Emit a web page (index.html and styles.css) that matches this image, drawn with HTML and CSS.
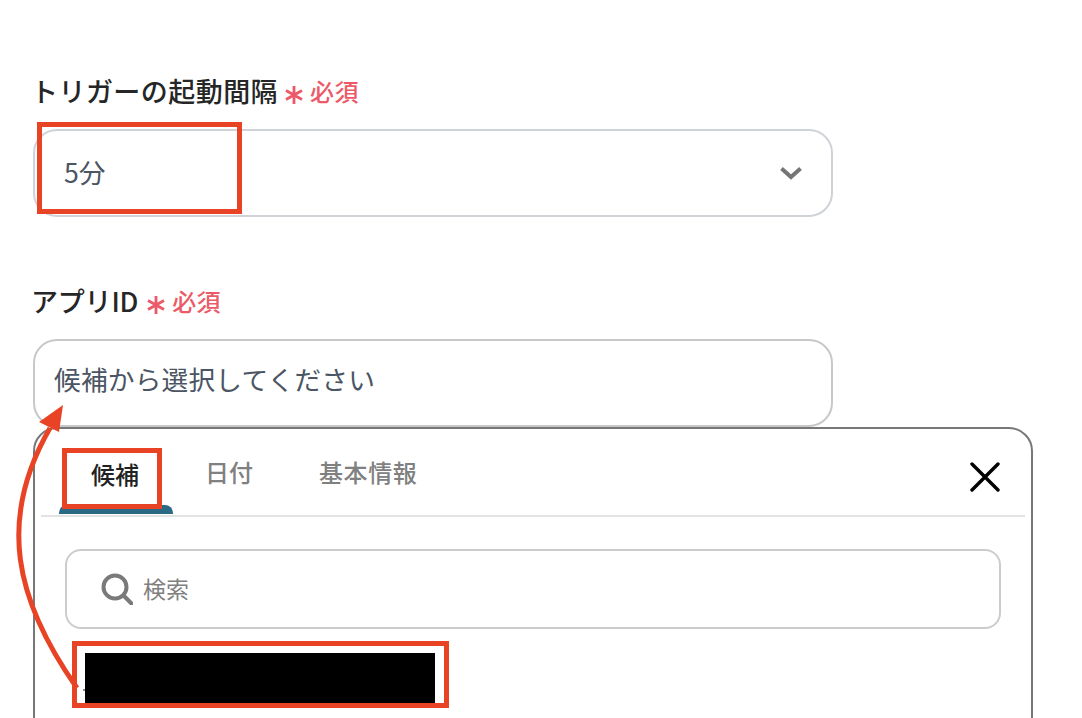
FILE: index.html
```html
<!DOCTYPE html>
<html lang="ja">
<head>
  <meta charset="UTF-8">
  <title>トリガーの起動間隔</title>
  <link rel="stylesheet" href="styles.css">
</head>
<body>
  <div class="page">

    <div class="field field-interval">
      <div class="label">
        <span class="label-text">トリガーの起動間隔</span>
        <svg class="star" viewBox="0 0 20 20"><path d="M10 1V19M2 5.5L18 14.5M2 14.5L18 5.5"/></svg>
        <span class="required">必須</span>
      </div>
      <div class="input select">
        <span class="value">5分</span>
        <svg class="chevron" viewBox="0 0 24 14"><path d="M2.5 2.5L12 11L21.5 2.5"/></svg>
      </div>
    </div>

    <div class="field field-app">
      <div class="label">
        <span class="label-text">アプリID</span>
        <svg class="star" viewBox="0 0 20 20"><path d="M10 1V19M2 5.5L18 14.5M2 14.5L18 5.5"/></svg>
        <span class="required">必須</span>
      </div>
      <div class="input placeholder">
        <span class="value">候補から選択してください</span>
      </div>
    </div>

    <div class="popup">
      <div class="tabs">
        <div class="tab active"><span class="tab-name">候補</span></div>
        <div class="tab tab-date">日付</div>
        <div class="tab tab-info">基本情報</div>
        <svg class="close" viewBox="0 0 30 30"><path d="M2 2L28 28M28 2L2 28"/></svg>
      </div>
      <div class="search">
        <svg class="search-icon" viewBox="0 0 32 32"><circle cx="14" cy="14" r="11.5"/><path d="M22.5 22.5L30.5 30.5"/></svg>
        <span class="search-text">検索</span>
      </div>
      <div class="row">
        <span class="row-dot"></span>
        <span class="redacted"></span>
      </div>
    </div>

    <div class="mark mark-interval"></div>
    <div class="mark mark-tab"></div>
    <div class="mark mark-row"></div>

    <svg class="arrow" viewBox="0 0 1082 718">
      <path class="arrow-line" d="M77 688C15 600 -3 520 50 428"/>
      <path class="arrow-head" d="M63 405L39 422L59 432Z"/>
    </svg>
  </div>
</body>
</html>
```

FILE: styles.css
```css
html, body {
  margin: 0;
  padding: 0;
  background: #fff;
}

.page {
  position: relative;
  width: 1082px;
  height: 718px;
  overflow: hidden;
  padding: 73px 0 0 33px;
  box-sizing: border-box;
  font-family: "Noto Sans CJK JP", "Noto Sans", sans-serif;
}

.field-interval {
  height: 210px;
}

.field-app {
  height: 144px;
}

.label {
  display: flex;
  align-items: center;
  height: 36px;
  margin-bottom: 20px;
}

.label-text {
  font-size: 27px;
  font-weight: 500;
  color: #262626;
  line-height: 36px;
  margin-left: -2px;
  letter-spacing: 0.45px;
}

.field-app .label-text {
  letter-spacing: -0.2px;
}

.star {
  width: 20px;
  height: 20px;
  margin: 8px 6px 0 6px;
  fill: none;
  stroke: #ec5a68;
  stroke-width: 2.8;
}

.field-app .star {
  margin-left: 8px;
}

.required {
  font-size: 24px;
  font-weight: 500;
  color: #ec5a68;
  line-height: 36px;
  letter-spacing: 0.4px;
}

.input {
  display: flex;
  align-items: center;
  justify-content: space-between;
  width: 800px;
  height: 88px;
  padding: 0 28px 0 20px;
  box-sizing: border-box;
  background: #fff;
  border: 2px solid #c8c8c8;
  border-radius: 24px;
}

.select {
  padding: 0 28px 4px 29px;
  border-color: #cfd3d7;
}

.placeholder {
  padding-bottom: 10px;
}

.value {
  font-size: 26.7px;
  color: #4b5563;
}

.placeholder .value {
  margin-left: -1px;
  letter-spacing: 0.2px;
}

.chevron {
  width: 24px;
  height: 14px;
  margin-top: 4px;
  fill: none;
  stroke: #757575;
  stroke-width: 4;
}

.popup {
  width: 1000px;
  height: 400px;
  box-sizing: border-box;
  background: #fff;
  border: 2px solid #777;
  border-radius: 24px 24px 0 0;
  padding: 0 6px;
}

.tabs {
  display: flex;
  align-items: center;
  height: 86px;
  border-bottom: 2px solid #e3e3e3;
}

.tab {
  font-size: 24px;
  font-weight: 500;
  color: #808080;
  line-height: 32px;
}

.tab.active {
  display: flex;
  flex-direction: column;
  align-items: center;
  width: 114px;
  height: 84px;
  margin-left: 18px;
  color: #222;
}

.tab.active::after {
  content: "";
  width: 100%;
  height: 9px;
  background: #2a6a85;
  border-radius: 8px 8px 0 0;
}

.tab-name {
  flex: 1;
  padding-top: 28px;
  margin-left: -2px;
}

.tab-date {
  margin-left: 32px;
}

.tab-info {
  margin-left: 66px;
  letter-spacing: 0.6px;
}

.close {
  width: 30px;
  height: 30px;
  margin: 10px 25px 0 auto;
  fill: none;
  stroke: #000;
  stroke-width: 3.4;
  stroke-linecap: round;
}

.search {
  display: flex;
  align-items: center;
  width: 936px;
  height: 80px;
  margin: 32px 0 0 24px;
  padding-left: 34px;
  box-sizing: border-box;
  border: 2px solid #ccc;
  border-radius: 16px;
}

.search-icon {
  width: 32px;
  height: 32px;
  fill: none;
  stroke: #7a7a7a;
  stroke-width: 4;
  stroke-linecap: round;
}

.search-text {
  font-size: 23px;
  color: #808080;
  margin: -2px 0 0 10px;
}

.row {
  display: flex;
  align-items: flex-end;
  margin: 24px 0 0 42px;
}

.row-dot {
  width: 2px;
  height: 2px;
  margin-bottom: 12px;
  background: #888;
}

.redacted {
  width: 350px;
  height: 50px;
  background: #000;
}

/* red annotations on top of the screenshot */
.mark {
  position: absolute;
  box-sizing: border-box;
  border: 5px solid #e94326;
}

.mark-interval {
  left: 37px;
  top: 122px;
  width: 205px;
  height: 92px;
}

.mark-tab {
  left: 62px;
  top: 448px;
  width: 100px;
  height: 61px;
}

.mark-row {
  left: 72px;
  top: 641px;
  width: 377px;
  height: 67px;
}

.arrow {
  position: absolute;
  left: 0;
  top: 0;
  width: 1082px;
  height: 718px;
  pointer-events: none;
}

.arrow-line {
  fill: none;
  stroke: #e94326;
  stroke-width: 5;
}

.arrow-head {
  fill: #e94326;
}
```
